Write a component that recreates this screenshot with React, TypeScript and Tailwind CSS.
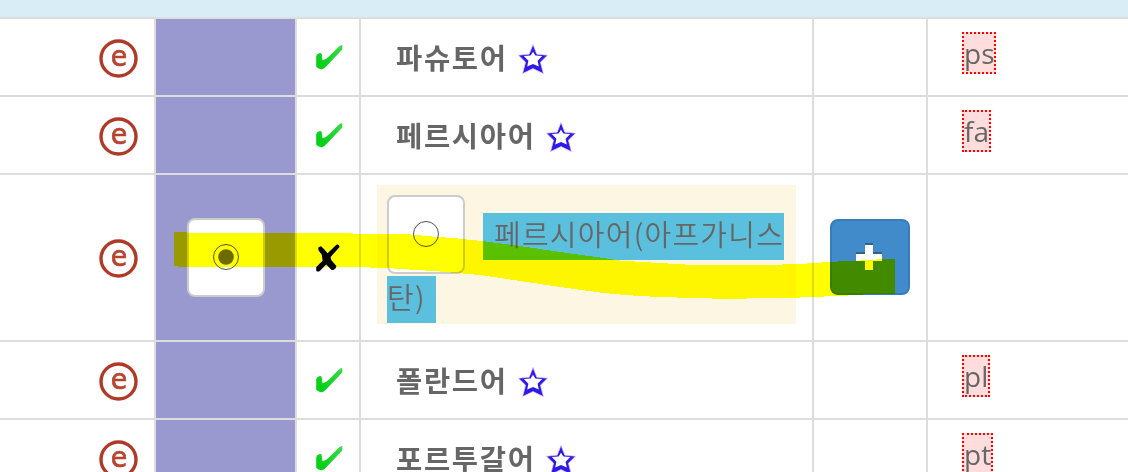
import React from "react";

const cell = "border-r-2 border-b-2 border-[#ddd] box-border shrink-0";
const korean = "font-['Noto_Sans_CJK_KR',sans-serif] text-[#666] whitespace-nowrap";

function EnabledIcon() {
  return (
    <svg width="40" height="40" viewBox="0 0 40 40" className="block shrink-0" role="img">
      <circle cx="20.5" cy="20.5" r="17.5" fill="none" stroke="#b03a28" strokeWidth="3.4" />
      <text x="21" y="27.8" fontSize="28.5" textAnchor="middle" fill="#b8432f" stroke="#b8432f" strokeWidth="0.7" fontFamily="DejaVu Sans, sans-serif" textLength="16.5" lengthAdjust="spacingAndGlyphs">
        e
      </text>
    </svg>
  );
}

function CheckIcon() {
  return (
    <svg width="30" height="28" viewBox="0 0 30 28" className="block shrink-0">
      <defs>
        <linearGradient id="check" x1="0" y1="1" x2="1" y2="0">
          <stop offset="0.2" stopColor="#06d018" />
          <stop offset="1" stopColor="#3bdc4b" />
        </linearGradient>
      </defs>
      <path d="M1.2 12.2Q1.4 10.4 4 9.3Q6.3 8.4 6.8 10.4L7.4 16.2Q11 15.8 14.2 12.3L23.5 3Q25.5 1.2 27.3 1.1L27.3 5.6L13.2 20.2Q9 25.2 6.3 25.3Q3.5 25.2 1.2 22.8Z" fill="url(#check)" />
    </svg>
  );
}

function CrossIcon() {
  return (
    <svg width="28" height="30" viewBox="0 0 28 30" className="block shrink-0">
      <path d="M3.2 3.6L6 2.2L8.4 4.4L12.6 9.2L21.4 .8Q24 -.2 24.6 3L15.6 13L16.2 16L21.4 22Q20.8 26.2 16.6 26L11.2 20.4L4.8 27Q2.4 28.4 1.2 26.4L1.2 23L7.6 16.8L6.8 10.8L3.6 6.6Z" fill="#000" />
    </svg>
  );
}

function StarIcon() {
  return (
    <svg width="32" height="32" viewBox="0 0 32 32" className="-mt-px ml-[9px] block shrink-0">
      <path d="M16 1.4L19.8 11.2L30.5 12.2L23.4 19.2L26.4 30.6L16 25.6L5.6 30.6L8.6 19.2L1.5 12.2L12.2 11.2Z" fill="#2a1be6" stroke="#eeb8ff" strokeWidth="0.7" />
      <path d="M16 8.8L18.4 12.6L25.2 13L20.6 17.8L21.8 23.6L16 20.9L10.2 23.6L11.4 17.8L6.8 13L13.6 12.6Z" fill="#fff" />
    </svg>
  );
}

function RadioBox({ checked = false }: { checked?: boolean }) {
  return (
    <span className="flex h-[79px] w-[78px] shrink-0 items-center justify-center rounded-[8px] border-2 border-[#ccc] bg-white pb-[2px]">
      <svg width="28" height="28" viewBox="0 0 28 28">
        <circle cx="14" cy="14" r="12.5" fill="none" stroke="#555" strokeWidth="1" />
        {checked && <circle cx="14" cy="14" r="7.8" fill="#6b6b6b" />}
      </svg>
    </span>
  );
}

function LanguageRow({ name, code }: { name: string; code: string }) {
  return (
    <div className="flex h-[78px] shrink-0">
      <div className={`${cell} flex w-[156px] justify-end pt-[19px] pr-[16px]`}>
        <EnabledIcon />
      </div>
      <div className={`${cell} w-[141px] bg-[#9999cf]`} />
      <div className={`${cell} w-[64px] pt-[25px] pl-[18px]`}>
        <CheckIcon />
      </div>
      <div className={`${cell} flex w-[453px] items-center pt-[4px] pl-[35px]`}>
        <span className={`${korean} -mt-[4px] text-[28.5px] leading-[44px] font-bold tracking-[1.7px]`}>{name}</span>
        <StarIcon />
      </div>
      <div className={`${cell} w-[114px]`} />
      <div className="w-[200px] shrink-0 border-b-2 border-[#ddd] pt-[13px] pl-[34px]">
        <span className="inline-block h-[42px] border-2 border-dotted border-[#f00] bg-[#fdd] font-['Open_Sans',sans-serif] text-[28px] leading-[38px] text-[#666]">
          {code}
        </span>
      </div>
    </div>
  );
}

function CandidateRow() {
  return (
    <div className="relative flex h-[167px] shrink-0">
      <div className={`${cell} flex w-[156px] justify-end pt-[63px] pr-[16px]`}>
        <EnabledIcon />
      </div>
      <div className={`${cell} w-[141px] bg-[#9999cf] pt-[43px] pl-[31px]`}>
        <RadioBox checked />
      </div>
      <div className={`${cell} w-[64px] pt-[69px] pl-[18px]`}>
        <CrossIcon />
      </div>
      <div className={`${cell} w-[453px] pt-[10px] pl-[16px]`}>
        <div className="flex h-[139px] w-[419px] flex-col items-start bg-[#fdf6e3] pt-[10px] pl-[10px]">
          <div className="flex">
            <RadioBox />
            <span className={`${korean} mt-[18px] ml-[18px] h-[47px] w-[301px] bg-[#5bc0de] pl-[11px] text-[29px] leading-[41px] font-[350] tracking-[1.25px]`}>
              페르시아어(아프가니스
            </span>
          </div>
          <span className={`${korean} mt-[2px] h-[47px] w-[49px] bg-[#5bc0de] text-[29px] leading-[41px] font-[350] tracking-[1.25px]`}>
            탄)
          </span>
        </div>
      </div>
      <div className={`${cell} w-[114px] pt-[44px] pl-[16px]`}>
        <button className="flex h-[76px] w-[80px] items-center justify-center rounded-[8px] border-2 border-[#357ebd] bg-[#428bca] pr-[2px]">
          <svg width="28" height="28" viewBox="0 0 28 28" shapeRendering="crispEdges">
            <path d="M10 0H18V9H27V18H18V27H10V18H1V9H10Z" fill="#2f6291" />
            <path d="M10 2H18V11H27V18H18V27H10V18H1V11H10Z" fill="#fff" />
          </svg>
        </button>
      </div>
      <div className="w-[200px] shrink-0 border-b-2 border-[#ddd]" />
      <svg
        className="pointer-events-none absolute top-0 left-0 mix-blend-multiply"
        width="1128"
        height="167"
        viewBox="0 175 1128 167"
        shapeRendering="crispEdges"
      >
        <path
          d="M174 232L187 232L187 233L353 233L353 234L406 234L432 236.5L453 238L482 241L520 246L560 252L600 257.5L620 260.5L643 262L693 265L764 265L800 264L828 262L847 261L873 260L878 259L895 259L895 293.5L870 294L848 295.5L800 297.5L747 298.5L712 298.5L660 297L640 296L613 294L600 292.5L560 287L520 281L480 275L440 271.5L394 268.5L370 267.5L178 267L178 266L174 266Z"
          fill="#ff0"
        />
      </svg>
    </div>
  );
}

export default function App() {
  return (
    <div className="flex h-[472px] w-[1128px] flex-col overflow-hidden bg-white">
      <div className="h-[19px] shrink-0 border-b-2 border-[#ddd] bg-[#d9edf7]" />
      <LanguageRow name="파슈토어" code="ps" />
      <LanguageRow name="페르시아어" code="fa" />
      <CandidateRow />
      <LanguageRow name="폴란드어" code="pl" />
      <LanguageRow name="포르투갈어" code="pt" />
    </div>
  );
}
